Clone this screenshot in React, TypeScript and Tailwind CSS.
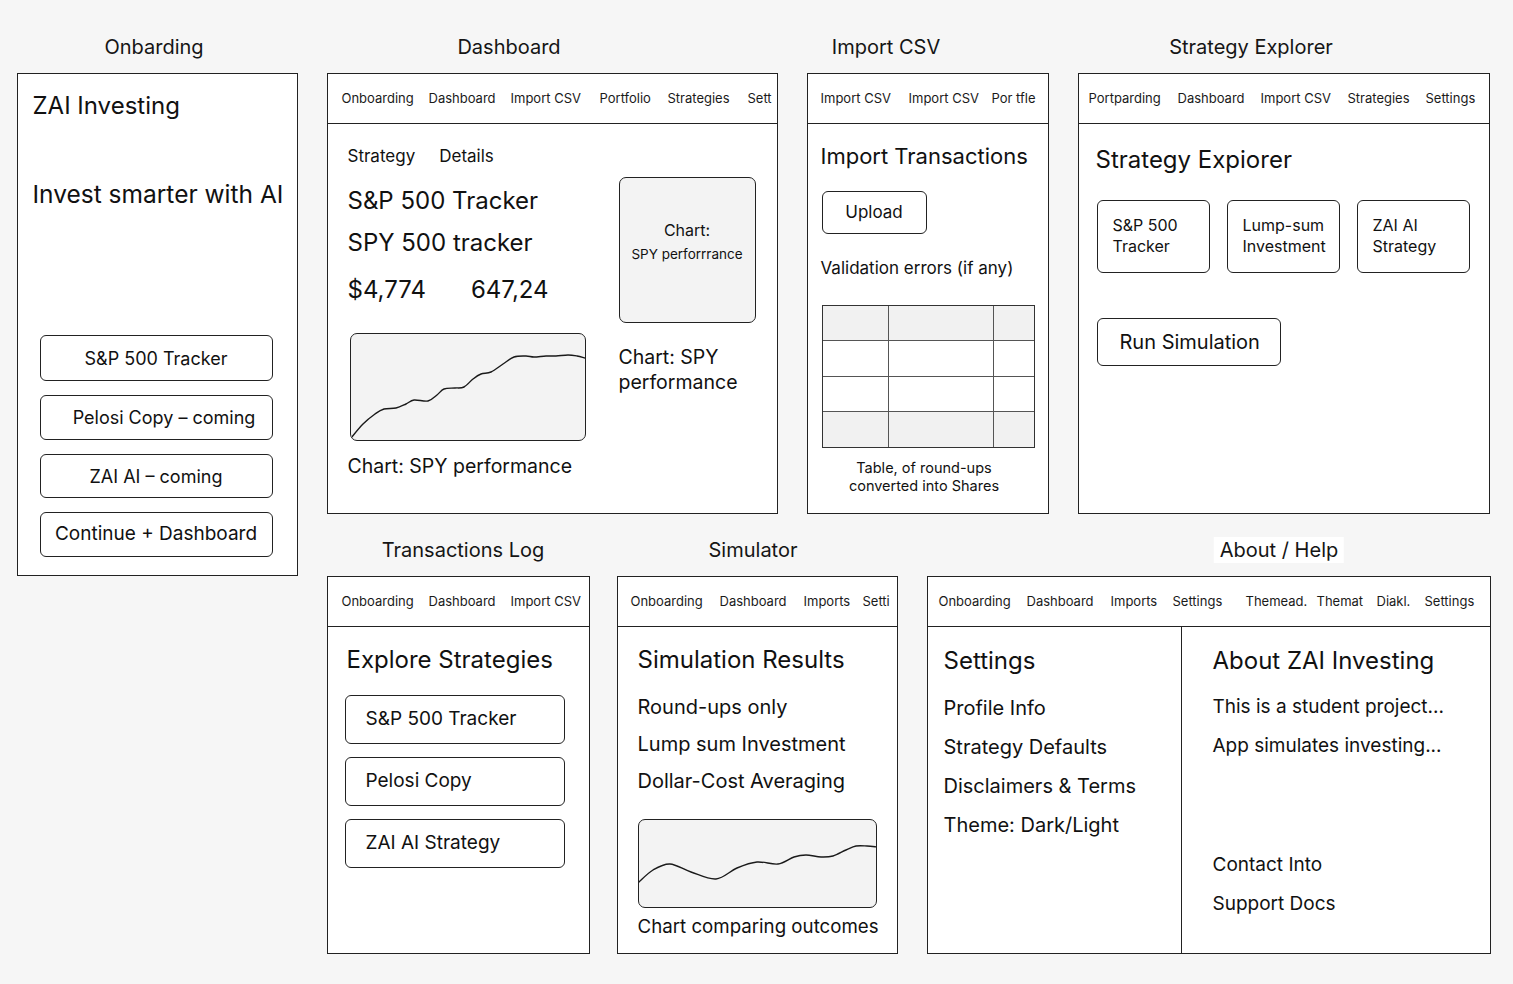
import clsx from 'clsx';
import type { ReactNode } from 'react';

// Wireframe board: each screen is a frame placed on a free canvas.

type NavItem = [string, string];

function Label({ text, className }: { text: string; className: string }) {
  return (
    <div className={clsx('absolute -translate-x-1/2 whitespace-nowrap text-[20px] leading-[26px] text-[#151515]', className)}>
      {text}
    </div>
  );
}

function Frame({ className, children }: { className: string; children: ReactNode }) {
  return (
    <div className={clsx('absolute flex flex-col overflow-hidden border-[1.5px] border-[#222] bg-white', className)}>
      {children}
    </div>
  );
}

function Nav({ items, className }: { items: NavItem[]; className: string }) {
  return (
    <div className={clsx('flex h-[50px] shrink-0 items-center overflow-hidden whitespace-nowrap border-b-[1.5px] border-[#222] text-[13px] text-[#1a1a1a]', className)}>
      {items.map(([label, w], i) => (
        <span key={i} className={clsx('shrink-0', w)}>{label}</span>
      ))}
    </div>
  );
}

function Btn({ className, children }: { className: string; children: ReactNode }) {
  return (
    <div className={clsx('flex shrink-0 items-center rounded-[6px] border-[1.5px] border-[#222] bg-white', className)}>
      {children}
    </div>
  );
}

function LineChart({ points, w, h }: { points: [number, number][]; w: number; h: number }) {
  // smooth the points with a simple catmull-rom to bezier pass
  let d = `M${points[0][0]},${points[0][1]}`;
  for (let i = 0; i < points.length - 1; i++) {
    const p0 = points[Math.max(0, i - 1)];
    const p1 = points[i];
    const p2 = points[i + 1];
    const p3 = points[Math.min(points.length - 1, i + 2)];
    const c1x = p1[0] + (p2[0] - p0[0]) / 6;
    const c1y = p1[1] + (p2[1] - p0[1]) / 6;
    const c2x = p2[0] - (p3[0] - p1[0]) / 6;
    const c2y = p2[1] - (p3[1] - p1[1]) / 6;
    d += ` C${c1x},${c1y} ${c2x},${c2y} ${p2[0]},${p2[1]}`;
  }
  return (
    <svg width={w} height={h} viewBox={`0 0 ${w} ${h}`} className="block">
      <path d={d} fill="none" stroke="#1a1a1a" strokeWidth="1.4" strokeLinejoin="round" strokeLinecap="round" />
    </svg>
  );
}

const spyPoints: [number, number][] = [
  [0, 104], [12, 90], [24, 80], [33, 75], [45, 74], [55, 70], [63, 66], [77, 67], [86, 61], [93, 55], [104, 54], [113, 53],
  [122, 45], [130, 40], [140, 38], [152, 30], [163, 23], [175, 22], [183, 23], [195, 22], [205, 22], [217, 21], [226, 22], [234, 24],
];

const simPoints: [number, number][] = [
  [0, 62], [14, 50], [31, 44], [52, 52], [77, 59], [98, 48], [118, 42], [139, 44], [155, 37], [167, 35], [182, 37], [194, 36],
  [207, 30], [217, 26], [228, 26], [238, 27],
];

export default function App() {
  return (
    <div className="relative h-[984px] w-[1513px] overflow-hidden bg-[#f6f6f6] font-['Inter','Liberation_Sans',sans-serif] text-[#111]">
      {/* screen captions */}
      <Label text="Onbarding" className="left-[154px] top-[34px]" />
      <Label text="Dashboard" className="left-[509px] top-[34px]" />
      <Label text="Import CSV" className="left-[886px] top-[34px]" />
      <Label text="Strategy Explorer" className="left-[1251px] top-[34px]" />
      <Label text="Transactions Log" className="left-[463px] top-[537px]" />
      <Label text="Simulator" className="left-[753px] top-[537px]" />
      <Label text="About / Help" className="left-[1279px] top-[537px] bg-white px-[6px]" />

      {/* Onboarding */}
      <Frame className="left-[17px] top-[73px] h-[503px] w-[281px]">
        <div className="flex flex-col pl-[14.5px] pt-[17px]">
          <div className="text-[24px] leading-[30px]">ZAI Investing</div>
          <div className="mt-[58px] whitespace-nowrap text-[24.5px] leading-[30px]">Invest smarter with AI</div>
          <div className="ml-[7px] mt-[126px] flex w-[233px] flex-col gap-[14px] text-[18px]">
            <Btn className="h-[46px] justify-center">S&amp;P 500 Tracker</Btn>
            <Btn className="h-[45px] justify-center pl-[16px]">Pelosi Copy – coming</Btn>
            <Btn className="h-[44px] justify-center">ZAI AI – coming</Btn>
            <Btn className="h-[45px] justify-center text-[19px]">Continue + Dashboard</Btn>
          </div>
        </div>
      </Frame>

      {/* Dashboard */}
      <Frame className="left-[327px] top-[73px] h-[441px] w-[451px]">
        <Nav
          className="pl-[13.5px]"
          items={[
            ['Onboarding', 'w-[87px]'],
            ['Dashboard', 'w-[82px]'],
            ['Import CSV', 'w-[89px]'],
            ['Portfolio', 'w-[68px]'],
            ['Strategies', 'w-[80px]'],
            ['Sett', 'w-[28px]'],
          ]}
        />
        <div className="flex pl-[19.5px]">
          <div className="flex w-[271px] shrink-0 flex-col pt-[20px]">
            <div className="flex gap-[24px] text-[17px] leading-[24px]">
              <span>Strategy</span>
              <span>Details</span>
            </div>
            <div className="mt-[18px] text-[24px] leading-[30px]">S&amp;P 500 Tracker</div>
            <div className="mt-[12px] text-[24px] leading-[30px]">SPY 500 tracker</div>
            <div className="mt-[17px] flex gap-[45px] text-[24px] leading-[30px]">
              <span>$4,774</span>
              <span>647,24</span>
            </div>
            <div className="ml-[2px] mt-[28px] h-[108px] w-[236px] overflow-hidden rounded-[7px] border-[1.5px] border-[#222] bg-[#f3f3f3]">
              <LineChart points={spyPoints} w={234} h={106} />
            </div>
            <div className="mt-[13px] text-[19.5px] leading-[24px]">Chart: SPY performance</div>
          </div>
          <div className="flex flex-col pt-[53px]">
            <div className="flex h-[146px] w-[137px] flex-col items-center justify-center rounded-[7px] border-[1.5px] border-[#222] bg-[#f3f3f3] pb-[18px]">
              <div className="text-[16px] leading-[22px]">Chart:</div>
              <div className="mt-[3px] text-[13.5px] leading-[20px]">SPY perforrrance</div>
            </div>
            <div className="mt-[22px] text-[19.5px] leading-[25px]">
              Chart: SPY
              <br />
              performance
            </div>
          </div>
        </div>
      </Frame>

      {/* Import CSV */}
      <Frame className="left-[807px] top-[73px] h-[441px] w-[242px]">
        <Nav
          className="pl-[12.5px]"
          items={[
            ['Import CSV', 'w-[88px]'],
            ['Import CSV', 'w-[83px]'],
            ['Por tfle', 'w-[50px]'],
          ]}
        />
        <div className="flex flex-col pl-[12.5px] pt-[18px]">
          <div className="text-[22px] leading-[28px]">Import Transactions</div>
          <Btn className="ml-[1px] mt-[21px] h-[43px] w-[105px] justify-center text-[17px]">Upload</Btn>
          <div className="mt-[22px] text-[17px] leading-[24px]">Validation errors (if any)</div>
          <div className="ml-[1px] mt-[25px] grid h-[143px] w-[213px] grid-cols-[66px_105px_1fr] grid-rows-4 border-[1.5px] border-[#333]">
            {[0, 1, 2, 3].map((r) =>
              [0, 1, 2].map((c) => (
                <div
                  key={`${r}-${c}`}
                  className={clsx(
                    'border-[#555]',
                    c < 2 && 'border-r-[1.5px]',
                    r < 3 && 'border-b',
                    r === 0 || r === 3 ? 'bg-[#f1f1f1]' : 'bg-white',
                  )}
                />
              )),
            )}
          </div>
          <div className="mt-[11px] w-[207px] text-center text-[14.5px] leading-[18px]">
            Table, of round-ups
            <br />
            converted into Shares
          </div>
        </div>
      </Frame>

      {/* Strategy Explorer */}
      <Frame className="left-[1078px] top-[73px] h-[441px] w-[412px]">
        <Nav
          className="pl-[9.5px]"
          items={[
            ['Portparding', 'w-[89px]'],
            ['Dashboard', 'w-[83px]'],
            ['Import CSV', 'w-[87px]'],
            ['Strategies', 'w-[78px]'],
            ['Settings', 'w-[60px]'],
          ]}
        />
        <div className="flex flex-col pl-[16.5px] pt-[21px]">
          <div className="text-[24px] leading-[30px]">Strategy Expiorer</div>
          <div className="ml-[1px] mt-[25px] flex gap-[17px] text-[16px] leading-[21px]">
            {[
              ['S&P 500', 'Tracker'],
              ['Lump-sum', 'Investment'],
              ['ZAI AI', 'Strategy'],
            ].map(([a, b]) => (
              <Btn key={a} className="h-[73px] w-[113px] items-start pl-[15px] pt-[14px]">
                <div>
                  {a}
                  <br />
                  {b}
                </div>
              </Btn>
            ))}
          </div>
          <Btn className="ml-[1px] mt-[45px] h-[48px] w-[184px] pl-[22px] text-[20px]">Run Simulation</Btn>
        </div>
      </Frame>

      {/* Transactions Log */}
      <Frame className="left-[327px] top-[576px] h-[378px] w-[263px]">
        <Nav
          className="pl-[13.5px]"
          items={[
            ['Onboarding', 'w-[87px]'],
            ['Dashboard', 'w-[82px]'],
            ['Import CSV', 'w-[72px]'],
          ]}
        />
        <div className="flex flex-col pl-[18.5px] pt-[18px]">
          <div className="text-[24px] leading-[30px]">Explore Strategies</div>
          <div className="-ml-[2px] mt-[20px] flex w-[220px] flex-col gap-[13px] text-[19px]">
            <Btn className="h-[49px] pl-[20px]">S&amp;P 500 Tracker</Btn>
            <Btn className="h-[49px] pl-[20px]">Pelosi Copy</Btn>
            <Btn className="h-[49px] pl-[20px]">ZAI AI Strategy</Btn>
          </div>
        </div>
      </Frame>

      {/* Simulator */}
      <Frame className="left-[617px] top-[576px] h-[378px] w-[281px]">
        <Nav
          className="pl-[12.5px]"
          items={[
            ['Onboarding', 'w-[89px]'],
            ['Dashboard', 'w-[84px]'],
            ['Imports', 'w-[59px]'],
            ['Setti', 'w-[30px]'],
          ]}
        />
        <div className="flex flex-col pl-[19.5px] pt-[18px]">
          <div className="text-[24px] leading-[30px]">Simulation Results</div>
          <div className="mt-[19px] flex flex-col gap-[11px] text-[20px] leading-[26px]">
            <div>Round-ups only</div>
            <div>Lump sum Investment</div>
            <div>Dollar-Cost Averaging</div>
          </div>
          <div className="mt-[25px] h-[89px] w-[239px] overflow-hidden rounded-[7px] border-[1.5px] border-[#222] bg-[#f3f3f3]">
            <LineChart points={simPoints} w={237} h={87} />
          </div>
          <div className="mt-[7px] whitespace-nowrap text-[18.7px] leading-[24px]">Chart comparing outcomes</div>
        </div>
      </Frame>

      {/* About / Help */}
      <Frame className="left-[927px] top-[576px] h-[378px] w-[564px]">
        <Nav
          className="pl-[10.5px]"
          items={[
            ['Onboarding', 'w-[88px]'],
            ['Dashboard', 'w-[84px]'],
            ['Imports', 'w-[62px]'],
            ['Settings', 'w-[73px]'],
            ['Themead.', 'w-[71px]'],
            ['Themat', 'w-[60px]'],
            ['Diakl.', 'w-[48px]'],
            ['Settings', 'w-[60px]'],
          ]}
        />
        <div className="flex flex-1">
          <div className="flex w-[254px] shrink-0 flex-col border-r-[1.5px] border-[#222] pl-[15.5px] pt-[19px]">
            <div className="text-[24px] leading-[30px]">Settings</div>
            <div className="mt-[19px] flex flex-col gap-[13px] text-[20px] leading-[26px]">
              <div>Profile Info</div>
              <div>Strategy Defaults</div>
              <div>Disclaimers &amp; Terms</div>
              <div>Theme: Dark/Light</div>
            </div>
          </div>
          <div className="flex flex-col pl-[30.5px] pt-[19px]">
            <div className="text-[24px] leading-[30px]">About ZAI Investing</div>
            <div className="mt-[19px] flex flex-col gap-[15px] text-[19px] leading-[24px]">
              <div>This is a student project...</div>
              <div>App simulates investing...</div>
              <div className="mt-[80px]">Contact Into</div>
              <div>Support Docs</div>
            </div>
          </div>
        </div>
      </Frame>
    </div>
  );
}
